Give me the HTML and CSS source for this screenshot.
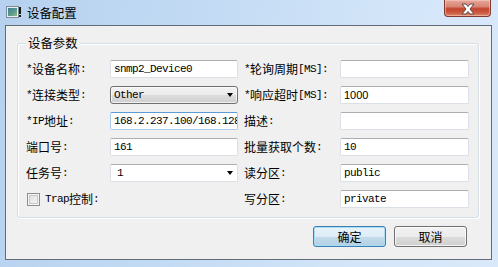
FILE: index.html
```html
<!DOCTYPE html>
<html lang="zh">
<head>
<meta charset="utf-8">
<title>设备配置</title>
<link rel="stylesheet" href="styles.css">
</head>
<body>
<div class="window">
  <div class="titlebar">
    <svg class="app-icon" width="15" height="12" viewBox="0 0 15 12">
      <defs>
        <linearGradient id="ig" x1="0" y1="0" x2="1" y2="1">
          <stop offset="0" stop-color="#3f7f98"/>
          <stop offset="0.6" stop-color="#5f9c8a"/>
          <stop offset="1" stop-color="#8fc07a"/>
        </linearGradient>
      </defs>
      <rect x="0.5" y="0.5" width="12" height="11" fill="#e8eef2" stroke="#7f8b96"/>
      <rect x="2" y="2" width="9" height="8" fill="url(#ig)"/>
      <rect x="13" y="1" width="2" height="7" fill="#1a1a1a"/>
      <rect x="13" y="9" width="2" height="2" fill="#1a1a1a"/>
    </svg>
    <span class="title">设备配置</span>
    <div class="close">
      <svg width="18" height="12" viewBox="0 0 18 12">
        <path d="M3 1 H7 L9 3.5 L11 1 H15 L11 6 L15 11 H11 L9 8.5 L7 11 H3 L7 6 Z" fill="#ffffff" stroke="#5a4a48" stroke-width="1" stroke-linejoin="round"/>
      </svg>
    </div>
  </div>
  <div class="client">
    <div class="group">
      <span class="legend">设备参数</span>
      <div class="grid">
        <div class="label"><span class="a">*</span>设备名称<span class="a">:</span></div>
        <div class="field mono">snmp2_Device0</div>
        <div class="label r"><span class="a">*</span>轮询周期<span class="a">[MS]:</span></div>
        <div class="field"></div>

        <div class="label"><span class="a">*</span>连接类型<span class="a">:</span></div>
        <div class="combo btnlike mono">Other<span class="arrow"></span></div>
        <div class="label r"><span class="a">*</span>响应超时<span class="a">[MS]:</span></div>
        <div class="field sans">1000</div>

        <div class="label"><span class="a">*IP</span>地址<span class="a">:</span></div>
        <div class="field focus mono">168.2.237.100/168.128</div>
        <div class="label r">描述<span class="a">:</span></div>
        <div class="field"></div>

        <div class="label">端口号<span class="a">:</span></div>
        <div class="field mono">161</div>
        <div class="label r">批量获取个数<span class="a">:</span></div>
        <div class="field mono">10</div>

        <div class="label">任务号<span class="a">:</span></div>
        <div class="combo field mono"><span class="pad">1</span><span class="arrow"></span></div>
        <div class="label r">读分区<span class="a">:</span></div>
        <div class="field mono">public</div>

        <div class="label check"><span class="box"></span><span class="a">Trap</span>控制<span class="a">:</span></div>
        <div></div>
        <div class="label r">写分区<span class="a">:</span></div>
        <div class="field mono">private</div>
      </div>
    </div>
    <div class="buttons">
      <div class="button default">确定</div>
      <div class="button">取消</div>
    </div>
  </div>
</div>
</body>
</html>
```
FILE: styles.css
```css
html, body {
  margin: 0;
  padding: 0;
}
body {
  width: 498px;
  height: 267px;
  overflow: hidden;
  background: linear-gradient(100deg, #b6d1ef 0%, #c3dbf4 40%, #d4e6f9 75%, #d9e9fa 100%);
  font-family: "Noto Sans CJK SC", sans-serif;
  font-size: 12px;
  color: #000;
}
.window {
  display: flex;
  flex-direction: column;
  height: 267px;
}
.titlebar {
  height: 25px;
  display: flex;
  align-items: flex-start;
}
.app-icon {
  margin: 6px 0 0 6px;
  flex: none;
}
.title {
  margin: 5px 0 0 6px;
  font-size: 12.4px;
  line-height: 16px;
  color: #000;
}
.close {
  margin-left: auto;
  margin-right: 7px;
  width: 47px;
  height: 17px;
  box-sizing: border-box;
  border: 1px solid #7f3a32;
  border-top: none;
  border-radius: 0 0 4px 4px;
  background: linear-gradient(#e6a69a 0%, #d98676 40%, #c3452f 55%, #cd5a41 80%, #e08a6c 100%);
  box-shadow: inset 0 0 0 1px rgba(255, 220, 210, 0.45);
  display: flex;
  align-items: center;
  justify-content: center;
}
.close svg {
  margin-top: 1px;
}
.client {
  margin: 0 6px 0 5px;
  height: 235px;
  box-sizing: border-box;
  border: 1px solid #636b76;
  background: #f0f0f0;
  display: flex;
  flex-direction: column;
}
.group {
  position: relative;
  margin: 17px 0 0 11px;
  width: 462px;
  box-sizing: border-box;
  border: 1px solid #d5dfe5;
  border-radius: 3px;
  box-shadow: inset 1px 1px 0 #fff, 1px 1px 0 #fff;
  padding: 16px 9px 9px 8px;
}
.legend {
  position: absolute;
  left: 8px;
  top: -9px;
  padding: 0 2px;
  background: #f0f0f0;
  line-height: 16px;
  font-size: 12.4px;
}
.grid {
  display: grid;
  grid-template-columns: 84px 128px 102px 129px;
  grid-auto-rows: 18px;
  row-gap: 8px;
}
.label {
  display: flex;
  align-items: center;
  white-space: nowrap;
  line-height: 18px;
}
.label.r {
  padding-left: 6px;
}
.a {
  font-family: "Liberation Mono", monospace;
  font-size: 11px;
  letter-spacing: -0.6px;
}
.mono {
  font-family: "Liberation Mono", monospace;
  font-size: 11px;
  letter-spacing: -0.6px;
}
.sans {
  font-family: "Liberation Sans", sans-serif;
  font-size: 11px;
}
.field {
  box-sizing: border-box;
  height: 18px;
  background: #fff;
  border: 1px solid #dbdfe6;
  border-top-color: #abadb3;
  border-radius: 2px;
  padding: 0 3px;
  line-height: 16px;
  white-space: nowrap;
  overflow: hidden;
}
.field.focus {
  border-color: #a9cdef;
  border-top-color: #5d9ad8;
}
.combo {
  position: relative;
  box-sizing: border-box;
  height: 18px;
  white-space: nowrap;
}
.combo .pad {
  padding-left: 3px;
}
.btnlike {
  border: 1px solid #707070;
  border-radius: 3px;
  background: linear-gradient(#f2f2f2 0%, #ebebeb 50%, #dddddd 51%, #cfcfcf 100%);
  box-shadow: inset 0 0 0 1px rgba(255, 255, 255, 0.7);
  padding: 0 3px;
  line-height: 16px;
}
.arrow {
  position: absolute;
  right: 4px;
  top: 6px;
  width: 0;
  height: 0;
  border-left: 3.5px solid transparent;
  border-right: 3.5px solid transparent;
  border-top: 4px solid #000;
}
.check {
  padding-left: 1px;
}
.box {
  width: 13px;
  height: 13px;
  box-sizing: border-box;
  border: 1px solid #8e8f8f;
  background: linear-gradient(135deg, #dcdcdc, #f7f7f7);
  box-shadow: inset 0 0 0 1px #f4f4f4, inset 0 0 0 2px #c8c8c8;
  margin-right: 5px;
  flex: none;
}
.buttons {
  display: flex;
  justify-content: flex-end;
  gap: 8px;
  margin-top: 8px;
  padding-right: 24px;
}
.button {
  width: 73px;
  height: 21px;
  box-sizing: border-box;
  border: 1px solid #707070;
  border-radius: 3px;
  background: linear-gradient(#f2f2f2 0%, #ebebeb 50%, #dddddd 51%, #cfcfcf 100%);
  box-shadow: inset 0 0 0 1px rgba(255, 255, 255, 0.75);
  display: flex;
  align-items: center;
  justify-content: center;
  font-size: 12px;
  line-height: 19px;
}
.button.default {
  border-color: #3c7fb1;
  background: linear-gradient(#eaf4fa 0%, #dcecf6 50%, #c4dcec 51%, #b3d0e4 100%);
  box-shadow: inset 0 0 0 1px #a9dcf6;
}
```
